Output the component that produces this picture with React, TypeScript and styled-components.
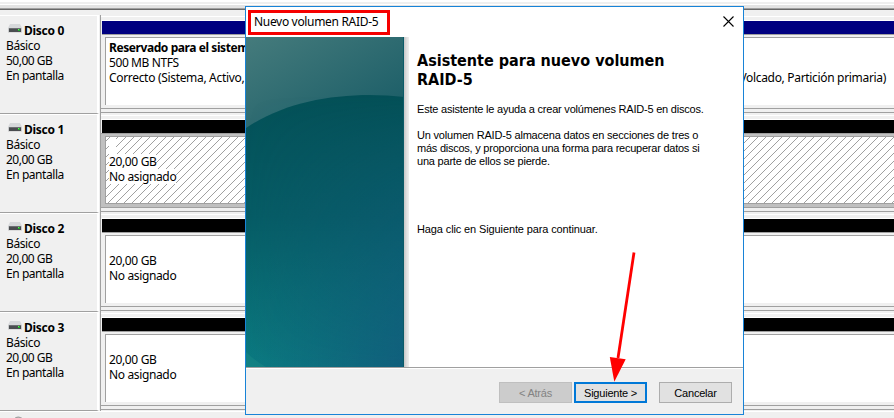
import React from "react";
import styled, { createGlobalStyle, css } from "styled-components";

const GlobalStyle = createGlobalStyle`
  * { box-sizing: border-box; }
  body { margin: 0; background: #f0f0f0; color: #000; overflow: hidden; }
`;

const Screen = styled.div`
  position: relative;
  width: 894px;
  height: 418px;
  overflow: hidden;
  background: #f0f0f0;
  font: 12px/15px "Noto Sans", "Open Sans", sans-serif;
`;

const TopEdge = styled.div`
  height: 15px;
  background: linear-gradient(
    #fff 0 2px, #efefef 2px 4px, #fff 4px 5px, #e3e3e3 5px 8px,
    #a0a0a0 8px 9px, #696969 9px 10px, #f0f0f0 10px
  );
`;

const DiskRow = styled.div`
  display: flex;
  height: 99px;
`;

const DiskLabel = styled.div`
  width: 99px;
  flex: none;
  padding: 7px 0 0 6px;
  border-top: 1px solid #fff;
  border-bottom: 1px solid #a0a0a0;
  border-right: 2px solid #fff;
  white-space: nowrap;
`;

const DiskName = styled.div`
  display: flex;
  height: 15px;
  padding-left: 2px;
  gap: 2px;
  font-weight: 700;
  letter-spacing: -0.28px;
  line-height: 16px;
  svg { margin-top: 1px; }
`;

const Line = styled.div<{ $bold?: boolean; $spacing?: number }>`
  height: 15px;
  white-space: nowrap;
  letter-spacing: ${(p) => p.$spacing ?? -0.32}px;
  font-weight: ${(p) => (p.$bold ? 700 : 400)};
`;

const DiskGraph = styled.div`
  flex: 1;
  min-width: 0;
  margin-left: 1px;
  border-left: 1px solid #a0a0a0;
  background: linear-gradient(
    #f0f0f0 0 1px, #fff 1px 2px, #f0f0f0 2px 5px, #fff 5px 6px,
    #f0f0f0 6px 93px, #a0a0a0 93px 94px, #f0f0f0 94px 97px,
    #a0a0a0 97px 98px, #f0f0f0 98px
  );
  padding: 6px 0 0 1px;
`;

const Stripe = styled.div<{ $color: string }>`
  height: 13px;
  background: ${(p) => p.$color};
`;

const Partitions = styled.div<{ $selected?: boolean }>`
  display: flex;
  height: 74px;
  border-top: 1px solid #a0a0a0;
  padding: 2px 0 0 3px;
  ${(p) =>
    p.$selected &&
    css`
      margin-left: -1px;
      padding: 2px 0 3px 4px;
      background: #c0c0c0;
    `}
`;

const Partition = styled.div<{ $width?: number; $hatched?: boolean; $right?: boolean }>`
  position: relative;
  flex: ${(p) => (p.$width ? "none" : 1)};
  width: ${(p) => (p.$width ? `${p.$width}px` : "auto")};
  height: 68px;
  overflow: hidden;
  border-top: 1px solid #a0a0a0;
  border-left: 1px solid #a0a0a0;
  background: #fff;
  padding: 2px 8px 0 3px;
  text-align: ${(p) => (p.$right ? "right" : "left")};
  ${(p) => p.$hatched && "border-bottom: 1px solid #a0a0a0;"}
`;

const Hatch = styled.svg`
  position: absolute;
  inset: 0;
  width: 100%;
  height: 100%;
`;

const Chip = styled.div`
  position: relative;
  width: max-content;
  height: 15px;
  min-width: 7px;
  background: #fff;
  letter-spacing: -0.36px;
`;

const DriveIcon = () => (
  <svg width="14" height="9" viewBox="0 0 14 9">
    <path d="M2 0h10l2 4H0z" fill="#d6d8da" />
    <path d="M0 4h14v4H0z" fill="#c9cbcd" />
    <rect x="1" y="4" width="12" height="4" fill="#4a4d50" />
    <rect x="1" y="4" width="12" height="1" fill="#6c6f72" />
    <rect y="8" width="14" height="1" fill="#dcdcdc" />
    <rect x="10" y="5" width="2" height="2" fill="#1fae2c" />
    <rect x="10" y="5" width="1" height="1" fill="#65f15c" />
  </svg>
);

const NextDisk = styled.div`
  height: 7px;
  padding: 4px 0 0 13px;
  border-top: 1px solid #fff;
  svg { display: block; }
`;

const Dialog = styled.div`
  position: absolute;
  left: 245px;
  top: 6px;
  width: 499px;
  height: 409px;
  display: flex;
  flex-direction: column;
  border: 1px solid #1883d7;
  background: #fff;
`;

const TitleBar = styled.div`
  display: flex;
  flex: none;
  height: 30px;
  justify-content: space-between;
  padding: 3px 9px 0 2px;
`;

const Title = styled.div`
  width: 142px;
  height: 25px;
  border: 3px solid #f60000;
  padding: 1px 0 0 3px;
  line-height: 16px;
  letter-spacing: -0.32px;
  white-space: nowrap;
`;

const CloseIcon = styled.svg`
  margin-top: 6px;
`;

const Content = styled.div`
  display: flex;
  flex: none;
  height: 330px;
`;

const Shade = styled.div`
  width: 5px;
  background: linear-gradient(90deg, #c6c6c6, #dedede 50%, #efefef);
`;

const Copy = styled.div`
  padding: 14px 0 0 8px;
  font: 11px/13px "Liberation Sans", Arial, sans-serif;
  white-space: nowrap;
`;

const Heading = styled.h1`
  margin: 0 0 14px;
  font: 700 16px/19px "DejaVu Sans Condensed", "DejaVu Sans", sans-serif;
  letter-spacing: 0;
`;

const Paragraph = styled.p<{ $after: number }>`
  margin: 0 0 ${(p) => p.$after}px;
`;

const CopyLine = styled.span<{ $spacing?: number }>`
  display: block;
  letter-spacing: ${(p) => p.$spacing ?? -0.21}px;
`;

const Footer = styled.div`
  display: flex;
  flex: 1;
  padding: 13px 11px 0 0;
  justify-content: flex-end;
  border-top: 1px solid #a0a0a0;
  background: #f0f0f0;
  box-shadow: inset 0 1px #fff;
`;

const Button = styled.button<{ $primary?: boolean; $gap?: number }>`
  width: 73px;
  height: 21px;
  margin: 1px 0 0 ${(p) => p.$gap ?? 0}px;
  padding: 1px 0 0;
  border: ${(p) => (p.$primary ? "2px solid #0078d7" : "1px solid #adadad")};
  background: #e1e1e1;
  color: #000;
  font: 11px/13px "Liberation Sans", Arial, sans-serif;
  letter-spacing: -0.22px;
  &:disabled {
    border-color: #bfbfbf;
    background: #ccc;
    color: #838383;
  }
`;

const Arrow = styled.svg`
  position: absolute;
  left: 600px;
  top: 245px;
`;

const Banner = () => (
  <svg width="158" height="330" viewBox="0 0 158 330">
    <defs>
      <linearGradient id="sky" x1="0" y1="0" x2="1" y2="1">
        <stop offset="0" stopColor="#457b7c" />
        <stop offset="1" stopColor="#165a65" />
      </linearGradient>
      <linearGradient id="sea" x1="0" y1="0" x2="0" y2="1">
        <stop offset="0" stopColor="#045057" />
        <stop offset=".45" stopColor="#065c65" />
        <stop offset="1" stopColor="#0b7b81" />
      </linearGradient>
      <linearGradient id="blue" x1="0" y1="0" x2="1" y2="0">
        <stop offset="0" stopColor="#125878" stopOpacity="0" />
        <stop offset="1" stopColor="#12587b" stopOpacity=".8" />
      </linearGradient>
      <linearGradient id="fade" x1="0" y1="0" x2="0" y2="1">
        <stop offset="0" stopColor="#fff" stopOpacity="0" />
        <stop offset="1" stopColor="#fff" />
      </linearGradient>
      <mask id="lower"><rect y="58" width="158" height="272" fill="url(#fade)" /></mask>
    </defs>
    <rect width="158" height="92" fill="url(#sky)" />
    <path d="M0 91C34 68 78 58 124 58Q142 58 158 60V330H0z" fill="url(#sea)" />
    <rect y="58" width="158" height="272" fill="url(#blue)" mask="url(#lower)" />
    <path d="M0 315Q9 324 20 330H0z" fill="#1f8b88" opacity=".4" />
    <path d="M157.5 0V330" stroke="#0b5b68" />
  </svg>
);

const HatchFill = () => (
  <Hatch>
    <defs>
      {/* One pixel per row, stepping left; the cell starts at (106, 137). */}
      <pattern id="hatch" width="8" height="8" patternUnits="userSpaceOnUse">
        {[0, 1, 2, 3, 4, 5, 6, 7].map((y) => (
          <rect key={y} x={(11 - y) % 8} y={y} width="1" height="1" fill="#a0a0a0" />
        ))}
      </pattern>
    </defs>
    <rect width="100%" height="100%" fill="url(#hatch)" />
  </Hatch>
);

const disks = [
  { name: "Disco 0", size: "50,00 GB" },
  { name: "Disco 1", size: "20,00 GB", selected: true },
  { name: "Disco 2", size: "20,00 GB" },
  { name: "Disco 3", size: "20,00 GB" },
];

export default function App() {
  return (
    <Screen>
      <GlobalStyle />
      <TopEdge />
      {disks.map((disk, i) => (
        <DiskRow key={disk.name}>
          <DiskLabel>
            <DiskName><DriveIcon />{disk.name}</DiskName>
            <Line $spacing={-0.4}>Básico</Line>
            <Line $spacing={-0.5}>{disk.size}</Line>
            <Line $spacing={-0.44}>En pantalla</Line>
          </DiskLabel>
          <DiskGraph>
            <Stripe $color={i === 0 ? "#000080" : "#000"} />
            <Partitions $selected={disk.selected}>
              {i === 0 ? (
                <>
                  <Partition $width={300}>
                    <Line $bold $spacing={-0.42}>Reservado para el sistema</Line>
                    <Line $spacing={-0.4}>500 MB NTFS</Line>
                    <Line>Correcto (Sistema, Activo, Partición primaria)</Line>
                  </Partition>
                  <Partition $right>
                    <Line />
                    <Line />
                    <Line>Volcado, Partición primaria)</Line>
                  </Partition>
                </>
              ) : (
                <Partition $hatched={disk.selected}>
                  {disk.selected && <HatchFill />}
                  <Chip />
                  <Chip>{disk.size}</Chip>
                  <Chip>No asignado</Chip>
                </Partition>
              )}
            </Partitions>
          </DiskGraph>
        </DiskRow>
      ))}
      <NextDisk>
        <svg width="11" height="3"><path d="M1 3Q5-1 10 3" fill="#bbb" stroke="#999" /></svg>
      </NextDisk>

      <Dialog>
        <TitleBar>
          <Title>Nuevo volumen RAID-5</Title>
          <CloseIcon width="11" height="11" viewBox="0 0 11 11">
            <path d="M.5.5l10 10M10.5.5l-10 10" stroke="#000" strokeWidth="1.1" />
          </CloseIcon>
        </TitleBar>
        <Content>
          <Banner />
          <Shade />
          <Copy>
            <Heading>Asistente para nuevo volumen<br />RAID-5</Heading>
            <Paragraph $after={13}>
              <CopyLine>Este asistente le ayuda a crear volúmenes RAID-5 en discos.</CopyLine>
            </Paragraph>
            <Paragraph $after={55}>
              <CopyLine $spacing={-0.19}>Un volumen RAID-5 almacena datos en secciones de tres o</CopyLine>
              <CopyLine $spacing={-0.24}>más discos, y proporciona una forma para recuperar datos si</CopyLine>
              <CopyLine>una parte de ellos se pierde.</CopyLine>
            </Paragraph>
            <Paragraph $after={0}>
              <CopyLine $spacing={-0.12}>Haga clic en Siguiente para continuar.</CopyLine>
            </Paragraph>
          </Copy>
        </Content>
        <Footer>
          <Button disabled>&lt; Atrás</Button>
          <Button $primary $gap={2}>Siguiente &gt;</Button>
          <Button $gap={12}>Cancelar</Button>
        </Footer>
      </Dialog>

      <Arrow width="45" height="140" viewBox="600 245 45 140">
        <path d="M634 252.5L618 358" stroke="#f00" strokeWidth="2.8" />
        <path d="M609.8 357L625.7 359.3L614.3 381.7z" fill="#f00" />
      </Arrow>
    </Screen>
  );
}
